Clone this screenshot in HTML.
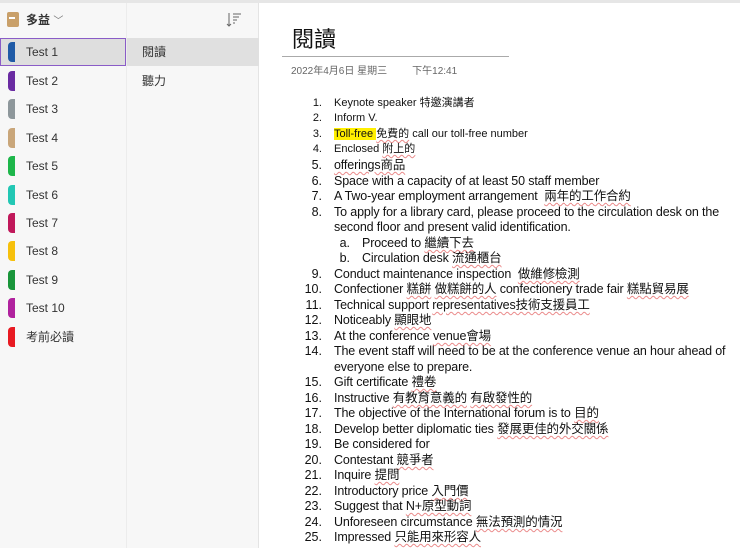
<!DOCTYPE html>
<html><head><meta charset="utf-8"><style>
*{margin:0;padding:0;box-sizing:border-box}
body{width:740px;height:548px;overflow:hidden;background:#fff;font-family:"Liberation Sans","Noto Sans CJK TC",sans-serif;color:#222;position:relative}
.top{position:absolute;left:0;top:0;width:740px;height:3px;background:#e6e6e6}
.side{position:absolute;left:0;top:3px;width:126px;height:545px;background:#f7f7f7}
.pages{position:absolute;left:126px;top:3px;width:133px;height:545px;background:#f7f7f7;border-left:1px solid #ececec;border-right:1px solid #e4e4e4}
.sec{position:absolute;left:0;width:126px;height:28px;font-size:12px;line-height:28px;padding-left:26px;color:#333}
.sec i{position:absolute;left:8px;top:4px;width:7px;height:20px;border-radius:4px 0 0 4px}
.sel{background:#dedede;border:1px solid #8a5cc7;line-height:26px;padding-left:25px}
.sel i{left:7px;top:3px}
.pg{position:absolute;left:127px;width:132px;height:28px;line-height:28px;padding-left:15px;font-size:12px;color:#333}
.ln{position:absolute;left:334px;white-space:nowrap;font-size:12.5px;letter-spacing:-0.14px;line-height:15px;color:#111}
.n{position:absolute;white-space:nowrap;font-size:12.5px;line-height:15px;text-align:right;width:30px;color:#111}
.s{font-size:11px;letter-spacing:0}
u{text-decoration:underline wavy rgba(220,60,60,.6);text-decoration-thickness:1px;text-underline-offset:2px}
</style></head><body>
<div class="top"></div>
<div class="side"></div>
<div class="pages"></div>
<div style="position:absolute;left:7px;top:12px;width:12px;height:15px;background:#c9a06a;border-radius:2px"></div>
<div style="position:absolute;left:9px;top:17px;width:6px;height:2px;background:#fff"></div>
<div style="position:absolute;left:26px;top:11px;font-size:12px;font-weight:bold;color:#333">多益 <span style="font-weight:normal;color:#777;font-size:10px">﹀</span></div>
<svg style="position:absolute;left:226px;top:12px" width="16" height="16" viewBox="0 0 16 16" fill="none" stroke="#666" stroke-width="1"><path d="M3 1v13M1 12l2 2 2-2M7 2h8M7 5h6M7 8h4M7 11h2"/></svg>

<div class="sec sel" style="top:38px"><i style="background:#1f5aa6"></i>Test 1</div>
<div class="sec" style="top:67px"><i style="background:#6a2ba2"></i>Test 2</div>
<div class="sec" style="top:95px"><i style="background:#8e979b"></i>Test 3</div>
<div class="sec" style="top:124px"><i style="background:#c9a67a"></i>Test 4</div>
<div class="sec" style="top:152px"><i style="background:#1db64a"></i>Test 5</div>
<div class="sec" style="top:181px"><i style="background:#22c7b4"></i>Test 6</div>
<div class="sec" style="top:209px"><i style="background:#c0185a"></i>Test 7</div>
<div class="sec" style="top:237px"><i style="background:#f6c00c"></i>Test 8</div>
<div class="sec" style="top:266px"><i style="background:#19953a"></i>Test 9</div>
<div class="sec" style="top:294px"><i style="background:#b0229e"></i>Test 10</div>
<div class="sec" style="top:323px"><i style="background:#e81a22"></i>考前必讀</div>

<div class="pg" style="top:38px;background:#e0e0e0">閱讀</div>
<div class="pg" style="top:67px">聽力</div>

<div style="position:absolute;left:292px;top:22px;font-size:22px;color:#111">閱讀</div>
<div style="position:absolute;left:282px;top:56px;width:227px;height:1px;background:#aaa"></div>
<div style="position:absolute;left:291px;top:62px;font-size:10px;color:#666">2022年4月6日 星期三&nbsp;&nbsp;&nbsp;&nbsp;&nbsp;&nbsp;&nbsp;&nbsp;&nbsp;下午12:41</div>

<div class="n s" style="left:292px;top:96px">1.</div><div class="ln s" style="top:96px">Keynote speaker 特邀演講者</div>
<div class="n s" style="left:292px;top:111px">2.</div><div class="ln s" style="top:111px">Inform V.</div>
<div class="n s" style="left:292px;top:127px">3.</div><div class="ln s" style="top:127px"><span style="background:#ffef00">Toll-free </span><u>免費的</u> call our toll-free number</div>
<div class="n s" style="left:292px;top:142px">4.</div><div class="ln s" style="top:142px">Enclosed <u>附上的</u></div>
<div class="n" style="left:292px;top:158px">5.</div><div class="ln" style="top:158px"><u>offerings商品</u></div>
<div class="n" style="left:292px;top:174px">6.</div><div class="ln" style="top:174px">Space with a capacity of at least 50 staff member</div>
<div class="n" style="left:292px;top:189px">7.</div><div class="ln" style="top:189px">A Two-year employment arrangement&nbsp; <u>兩年的工作合約</u></div>
<div class="n" style="left:292px;top:205px">8.</div><div class="ln" style="top:205px">To apply for a library card, please proceed to the circulation desk on the</div>
<div class="ln" style="top:220px">second floor and present valid identification.</div>
<div class="n" style="left:320px;top:236px">a.</div><div class="ln" style="left:362px;top:236px">Proceed to <u>繼續下去</u></div>
<div class="n" style="left:320px;top:251px">b.</div><div class="ln" style="left:362px;top:251px">Circulation desk <u>流通櫃台</u></div>
<div class="n" style="left:292px;top:267px">9.</div><div class="ln" style="top:267px">Conduct maintenance inspection&nbsp; <u>做維修檢測</u></div>
<div class="n" style="left:292px;top:282px">10.</div><div class="ln" style="top:282px">Confectioner <u>糕餅</u> <u>做糕餅的人</u> confectionery trade fair <u>糕點貿易展</u></div>
<div class="n" style="left:292px;top:298px">11.</div><div class="ln" style="top:298px">Technical support <u>representatives技術支援員工</u></div>
<div class="n" style="left:292px;top:313px">12.</div><div class="ln" style="top:313px">Noticeably <u>顯眼地</u></div>
<div class="n" style="left:292px;top:329px">13.</div><div class="ln" style="top:329px">At the conference <u>venue會場</u></div>
<div class="n" style="left:292px;top:344px">14.</div><div class="ln" style="top:344px">The event staff will need to be at the conference venue an hour ahead of</div>
<div class="ln" style="top:360px">everyone else to prepare.</div>
<div class="n" style="left:292px;top:375px">15.</div><div class="ln" style="top:375px">Gift certificate <u>禮卷</u></div>
<div class="n" style="left:292px;top:391px">16.</div><div class="ln" style="top:391px">Instructive <u>有教育意義的</u> <u>有啟發性的</u></div>
<div class="n" style="left:292px;top:406px">17.</div><div class="ln" style="top:406px">The objective of the International forum is to <u>目的</u></div>
<div class="n" style="left:292px;top:422px">18.</div><div class="ln" style="top:422px">Develop better diplomatic ties <u>發展更佳的外交關係</u></div>
<div class="n" style="left:292px;top:437px">19.</div><div class="ln" style="top:437px">Be considered for</div>
<div class="n" style="left:292px;top:453px">20.</div><div class="ln" style="top:453px">Contestant <u>競爭者</u></div>
<div class="n" style="left:292px;top:468px">21.</div><div class="ln" style="top:468px">Inquire <u>提問</u></div>
<div class="n" style="left:292px;top:484px">22.</div><div class="ln" style="top:484px">Introductory price <u>入門價</u></div>
<div class="n" style="left:292px;top:499px">23.</div><div class="ln" style="top:499px">Suggest that <u>N+原型動詞</u></div>
<div class="n" style="left:292px;top:515px">24.</div><div class="ln" style="top:515px">Unforeseen circumstance <u>無法預測的情況</u></div>
<div class="n" style="left:292px;top:530px">25.</div><div class="ln" style="top:530px">Impressed <u>只能用來形容人</u></div>
</body></html>
